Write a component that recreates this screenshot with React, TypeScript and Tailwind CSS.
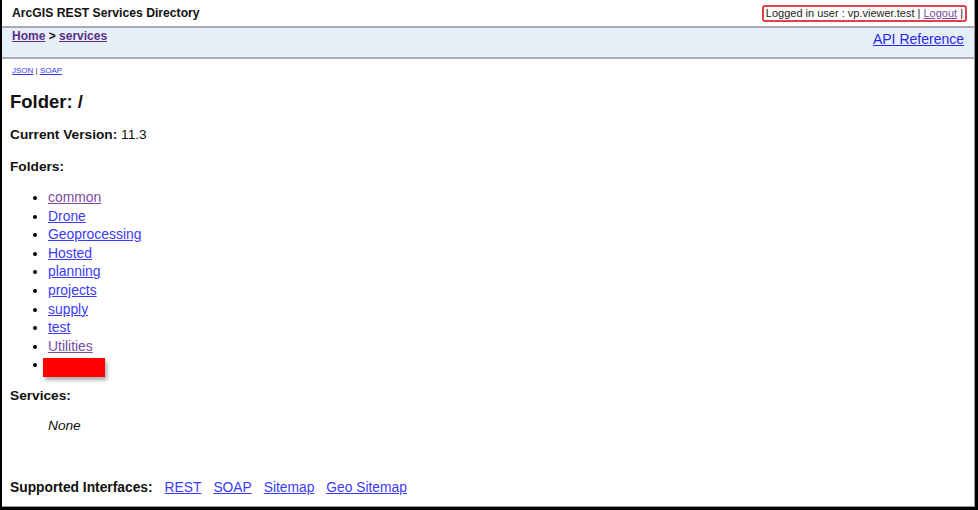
const folders = [
  { name: "common", visited: true },
  { name: "Drone", visited: false },
  { name: "Geoprocessing", visited: false },
  { name: "Hosted", visited: false },
  { name: "planning", visited: false },
  { name: "projects", visited: false },
  { name: "supply", visited: false },
  { name: "test", visited: false },
  { name: "Utilities", visited: true },
];

const link = "text-[#3b3bf5] underline";
const visited = "text-[#7b4ca0] underline";

export default function App() {
  return (
    <div className="h-[510px] w-[978px] overflow-hidden bg-black font-['Liberation_Sans',Arial,sans-serif] text-[#111]">
      <div className="ml-[2px] mr-[3px] flex h-[507px] flex-col border-r border-b border-[#9a9a9a] bg-white">
        {/* top bar */}
        <div className="flex h-[26px] items-center justify-between pl-[10px] pr-[7px] pt-[1px]">
          <span className="text-[12.2px] font-bold">ArcGIS REST Services Directory</span>
          <span className="rounded-[3px] border-2 border-[#e0414a] px-[2px] text-[11px] leading-[13px] text-[#222]">
            Logged in user : vp.viewer.test | <span className={visited}>Logout</span> |
          </span>
        </div>
        <div className="flex h-[33px] items-start justify-between border-t-2 border-b-2 border-[#a9adb2] bg-[#e6eef7] pl-[10px] pr-[10px]">
          <div className="pt-[1px] text-[12px] font-bold leading-[15px]">
            <span className="text-[#5a2f8a] underline">Home</span> &gt;{" "}
            <span className="text-[#5a2f8a] underline">services</span>
          </div>
          <span className="pt-[3px] text-[14px] leading-[16px] text-[#2a2ae8] underline">API Reference</span>
        </div>
        <div className="pl-[10px] pt-[7px] text-[8px] leading-[10px] text-[#333]">
          <span className={link}>JSON</span> | <span className={link}>SOAP</span>
        </div>
        <h1 className="mt-[15px] pl-[8px] text-[18.5px] font-bold leading-[22px]">Folder: /</h1>
        <p className="mt-[14px] pl-[8px] text-[13.7px] leading-[16px]">
          <b>Current Version:</b> 11.3
        </p>
        <p className="mt-[16px] pl-[8px] text-[13.7px] font-bold leading-[16px]">Folders:</p>
        <ul className="mt-[13px] list-disc pl-[46px] text-[13.9px] leading-[18.6px] marker:text-black">
          {folders.map((f) => (
            <li key={f.name}>
              <span className={f.visited ? visited : link}>{f.name}</span>
            </li>
          ))}
          <li>
            <span className="inline-block h-[19px] w-[62px] translate-y-[3px] -ml-[5px] bg-[#ff0000] align-top shadow-[2px_3px_4px_rgba(0,0,0,0.35)]" />
          </li>
        </ul>
        <p className="mt-[14px] pl-[8px] text-[13.7px] font-bold leading-[16px]">Services:</p>
        <p className="mt-[14px] pl-[46px] text-[13.7px] italic leading-[16px]">None</p>
        <div className="mt-[46px] flex items-center pl-[8px] text-[13.8px] leading-[16px]">
          <b className="mr-[12px]">Supported Interfaces:</b>
          <span className={`${link} mr-[12px]`}>REST</span>
          <span className={`${link} mr-[12px]`}>SOAP</span>
          <span className={`${link} mr-[12px]`}>Sitemap</span>
          <span className={link}>Geo Sitemap</span>
        </div>
      </div>
    </div>
  );
}
